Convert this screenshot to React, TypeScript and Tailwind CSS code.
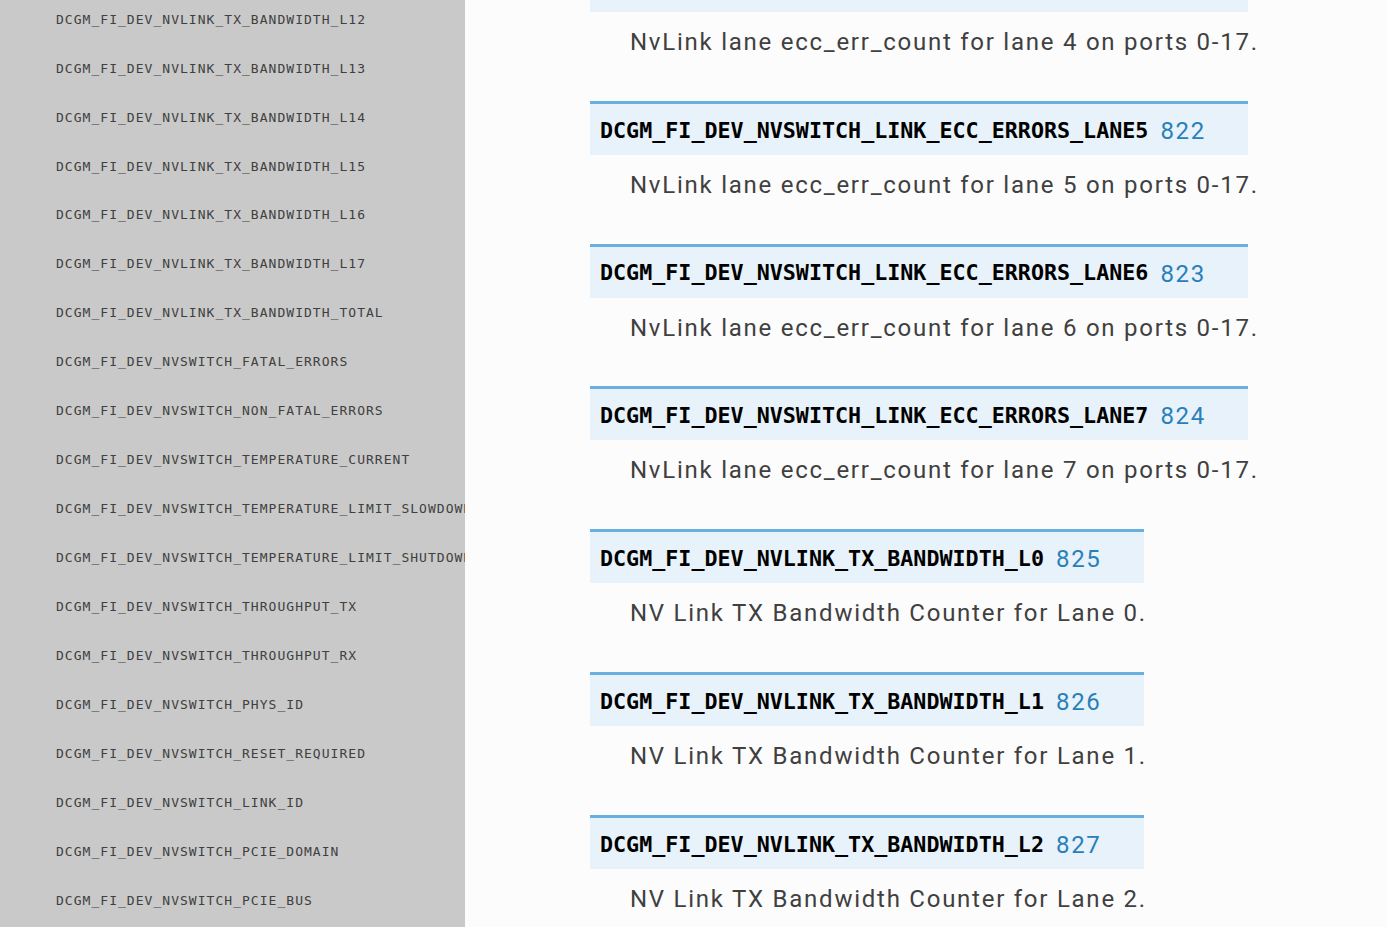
const navItems = [
  "DCGM_FI_DEV_NVLINK_TX_BANDWIDTH_L12",
  "DCGM_FI_DEV_NVLINK_TX_BANDWIDTH_L13",
  "DCGM_FI_DEV_NVLINK_TX_BANDWIDTH_L14",
  "DCGM_FI_DEV_NVLINK_TX_BANDWIDTH_L15",
  "DCGM_FI_DEV_NVLINK_TX_BANDWIDTH_L16",
  "DCGM_FI_DEV_NVLINK_TX_BANDWIDTH_L17",
  "DCGM_FI_DEV_NVLINK_TX_BANDWIDTH_TOTAL",
  "DCGM_FI_DEV_NVSWITCH_FATAL_ERRORS",
  "DCGM_FI_DEV_NVSWITCH_NON_FATAL_ERRORS",
  "DCGM_FI_DEV_NVSWITCH_TEMPERATURE_CURRENT",
  "DCGM_FI_DEV_NVSWITCH_TEMPERATURE_LIMIT_SLOWDOWN",
  "DCGM_FI_DEV_NVSWITCH_TEMPERATURE_LIMIT_SHUTDOWN",
  "DCGM_FI_DEV_NVSWITCH_THROUGHPUT_TX",
  "DCGM_FI_DEV_NVSWITCH_THROUGHPUT_RX",
  "DCGM_FI_DEV_NVSWITCH_PHYS_ID",
  "DCGM_FI_DEV_NVSWITCH_RESET_REQUIRED",
  "DCGM_FI_DEV_NVSWITCH_LINK_ID",
  "DCGM_FI_DEV_NVSWITCH_PCIE_DOMAIN",
  "DCGM_FI_DEV_NVSWITCH_PCIE_BUS",
];

type Field = { name: string; id: number; desc: string };

const fields: Field[] = [
  { name: "DCGM_FI_DEV_NVSWITCH_LINK_ECC_ERRORS_LANE4", id: 821, desc: "NvLink lane ecc_err_count for lane 4 on ports 0-17." },
  { name: "DCGM_FI_DEV_NVSWITCH_LINK_ECC_ERRORS_LANE5", id: 822, desc: "NvLink lane ecc_err_count for lane 5 on ports 0-17." },
  { name: "DCGM_FI_DEV_NVSWITCH_LINK_ECC_ERRORS_LANE6", id: 823, desc: "NvLink lane ecc_err_count for lane 6 on ports 0-17." },
  { name: "DCGM_FI_DEV_NVSWITCH_LINK_ECC_ERRORS_LANE7", id: 824, desc: "NvLink lane ecc_err_count for lane 7 on ports 0-17." },
  { name: "DCGM_FI_DEV_NVLINK_TX_BANDWIDTH_L0", id: 825, desc: "NV Link TX Bandwidth Counter for Lane 0." },
  { name: "DCGM_FI_DEV_NVLINK_TX_BANDWIDTH_L1", id: 826, desc: "NV Link TX Bandwidth Counter for Lane 1." },
  { name: "DCGM_FI_DEV_NVLINK_TX_BANDWIDTH_L2", id: 827, desc: "NV Link TX Bandwidth Counter for Lane 2." },
];

function Sidebar() {
  return (
    <nav className="w-[465px] shrink-0 h-full bg-[#c9c9c9] overflow-hidden">
      <ul className="mt-[-5px]">
        {navItems.map((item) => (
          <li
            key={item}
            className="h-[48.95px] flex items-center pl-[56px] whitespace-nowrap text-[13px] tracking-[1.03px] text-[#404040]"
            style={{ fontFamily: '"DejaVu Sans Mono", monospace' }}
          >
            {item}
          </li>
        ))}
      </ul>
    </nav>
  );
}

function FieldEntry({ field }: { field: Field }) {
  return (
    <dl className="mb-[40.8px]">
      <dt className="w-fit h-[54px] flex items-center border-t-[3px] border-[#6ab0de] bg-[#e7f2fa] pl-[10px] pr-[42px] pt-[3px]">
        <code
          className="font-bold text-[21.7px] text-black"
          style={{ fontFamily: '"DejaVu Sans Mono", monospace' }}
        >
          {field.name}
        </code>
        <span className="ml-[12px] text-[24px] tracking-[1.7px] text-[#2980b9]">{field.id}</span>
      </dt>
      <dd className="ml-[40px] mt-[12px] text-[24px] leading-[36px] tracking-[1.75px] text-[#404040]">
        {field.desc}
      </dd>
    </dl>
  );
}

export default function App() {
  return (
    <div
      className="flex w-[1387px] h-[927px] overflow-hidden bg-[#fcfcfc]"
      style={{ fontFamily: 'Roboto, "Noto Sans", sans-serif' }}
    >
      <Sidebar />
      <main className="flex-1 pl-[125px] mt-[-42px]">
        {fields.map((f) => (
          <FieldEntry key={f.id} field={f} />
        ))}
      </main>
    </div>
  );
}
